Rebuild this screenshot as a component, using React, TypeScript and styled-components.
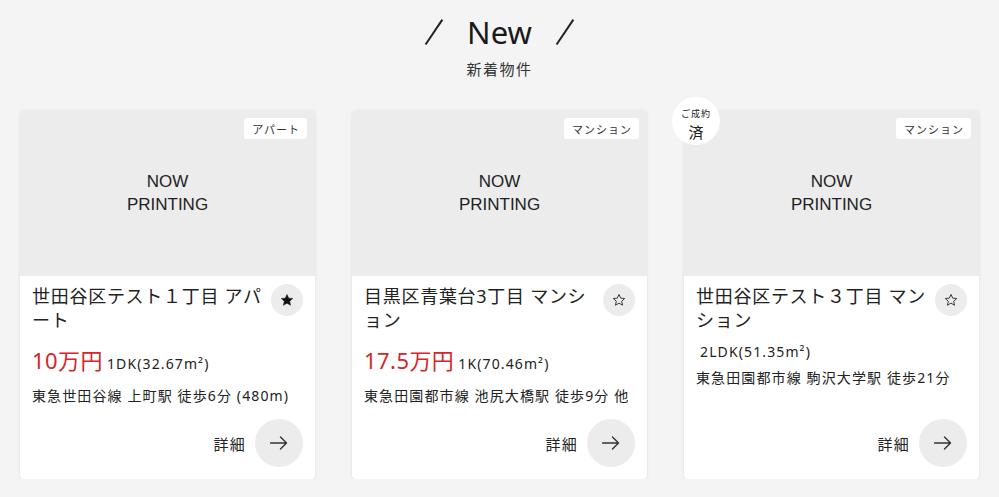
import React from "react";
import styled, { createGlobalStyle } from "styled-components";

const GlobalStyle = createGlobalStyle`
  html, body { margin: 0; padding: 0; background: #f4f4f4; }
  body {
    font-family: "Noto Sans", "Noto Sans CJK JP", sans-serif;
    color: #222;
    -webkit-font-smoothing: antialiased;
  }
`;

const Page = styled.section`
  padding: 12px 20px 0;
  box-sizing: border-box;
  width: 999px;
`;

const Heading = styled.header`
  display: flex;
  flex-direction: column;
  align-items: center;
`;

const TitleRow = styled.div`
  display: flex;
  align-items: center;
  gap: 25px;
  height: 40px;
`;

const Slash = styled.span`
  display: block;
  width: 17px;
  height: 25px;
  position: relative;
  &::before {
    content: "";
    position: absolute;
    left: 7.5px;
    top: -2.5px;
    width: 1.8px;
    height: 30px;
    background: #222;
    transform: rotate(34deg);
  }
`;

const Title = styled.h2`
  margin: 0;
  font-family: "Noto Sans", sans-serif;
  font-weight: 400;
  font-size: 31px;
  line-height: 40px;
  color: #1a1a1a;
`;

const Subtitle = styled.p`
  margin: 5px 0 0;
  font-size: 15px;
  line-height: 24px;
  letter-spacing: 0.1em;
  color: #333;
`;

const Grid = styled.div`
  margin-top: 29px;
  display: grid;
  grid-template-columns: repeat(3, 295px);
  column-gap: 37px;
`;

const Card = styled.article`
  position: relative;
  background: #fff;
  border-radius: 4px;
  box-shadow: 0 1px 3px rgba(0, 0, 0, 0.1);
  display: flex;
  flex-direction: column;
  height: 369px;
`;

const ImageArea = styled.div`
  position: relative;
  height: 166px;
  background: #ececec;
  border-radius: 4px 4px 0 0;
  display: flex;
  align-items: center;
  justify-content: center;
`;

const NowPrinting = styled.div`
  font-family: "Liberation Sans", Arial, sans-serif;
  font-size: 17px;
  line-height: 23px;
  text-align: center;
  color: #222;
`;

const TypeBadge = styled.span`
  position: absolute;
  top: 8px;
  right: 8px;
  background: #fff;
  border-radius: 3px;
  height: 21px;
  padding: 0 7px 0 8px;
  display: flex;
  align-items: center;
  font-size: 11px;
  letter-spacing: 1px;
  color: #333;
`;

const SoldBadge = styled.div`
  position: absolute;
  top: -13px;
  left: -12px;
  width: 48px;
  height: 48px;
  box-sizing: border-box;
  padding-top: 7px;
  border-radius: 50%;
  background: #fff;
  display: flex;
  flex-direction: column;
  align-items: center;
  justify-content: center;
  gap: 3px;
  z-index: 2;
  color: #222;
`;

const SoldSmall = styled.span`
  font-size: 9px;
  line-height: 12px;
  letter-spacing: 1px;
`;

const SoldBig = styled.span`
  font-size: 15px;
  line-height: 18px;
`;

const Body = styled.div`
  flex: 1;
  display: flex;
  flex-direction: column;
  padding: 8px 12px 12px 12px;
`;

const TitleLine = styled.div`
  display: flex;
  align-items: flex-start;
  justify-content: space-between;
  gap: 4px;
`;

const CardTitle = styled.h3`
  margin: 0;
  font-weight: 400;
  font-size: 18px;
  line-height: 24px;
  letter-spacing: 0.04em;
  color: #222;
  flex: 1;
`;

const FavButton = styled.button`
  flex: none;
  width: 32px;
  height: 32px;
  border-radius: 50%;
  border: none;
  background: #ececec;
  display: flex;
  align-items: center;
  justify-content: center;
  padding: 0;
`;

const PriceLine = styled.div`
  margin-top: 12px;
  display: flex;
  align-items: baseline;
`;

const Price = styled.span`
  font-size: 22px;
  line-height: 33px;
  color: #d4262b;
  letter-spacing: 0.02em;
`;

const Spec = styled.span`
  margin-left: 4px;
  font-size: 14px;
  line-height: 15px;
  letter-spacing: 0.08em;
  color: #222;
`;

const Access = styled.p`
  margin: 8px 0 0;
  font-size: 14px;
  line-height: 21px;
  letter-spacing: 0.08em;
  color: #222;
`;

const Footer = styled.div`
  margin-top: auto;
  display: flex;
  justify-content: flex-end;
  align-items: center;
  gap: 9px;
`;

const DetailLabel = styled.span`
  font-size: 15px;
  letter-spacing: 0.08em;
  color: #222;
`;

const ArrowCircle = styled.a`
  width: 48px;
  height: 48px;
  border-radius: 50%;
  background: #ececec;
  display: flex;
  align-items: center;
  justify-content: center;
`;

const Star = ({ filled }: { filled: boolean }) => (
  <svg width="14" height="14" viewBox="0 0 24 24">
    <path
      d="M12 2.5l2.9 6.3 6.9.7-5.2 4.6 1.5 6.8L12 17.4l-6.1 3.5 1.5-6.8-5.2-4.6 6.9-.7z"
      fill={filled ? "#111" : "none"}
      stroke="#222"
      strokeWidth={filled ? 1 : 1.5}
      strokeLinejoin="round"
    />
  </svg>
);

const Arrow = () => (
  <svg width="18" height="14" viewBox="0 0 18 14" fill="none">
    <path d="M0.5 7H16.5M10.5 1l6 6-6 6" stroke="#333" strokeWidth="1.4" strokeLinecap="round" strokeLinejoin="round" />
  </svg>
);

type Item = {
  title: string;
  type: string;
  price?: string;
  spec: string;
  access: string;
  fav: boolean;
  sold?: boolean;
};

const items: Item[] = [
  {
    title: "世田谷区テスト１丁目 アパート",
    type: "アパート",
    price: "10万円",
    spec: "1DK(32.67m²)",
    access: "東急世田谷線 上町駅 徒歩6分 (480m)",
    fav: true,
  },
  {
    title: "目黒区青葉台3丁目 マンション",
    type: "マンション",
    price: "17.5万円",
    spec: "1K(70.46m²)",
    access: "東急田園都市線 池尻大橋駅 徒歩9分 他",
    fav: false,
  },
  {
    title: "世田谷区テスト３丁目 マンション",
    type: "マンション",
    spec: "2LDK(51.35m²)",
    access: "東急田園都市線 駒沢大学駅 徒歩21分",
    fav: false,
    sold: true,
  },
];

export default function App() {
  return (
    <>
      <GlobalStyle />
      <Page>
        <Heading>
          <TitleRow>
            <Slash />
            <Title>New</Title>
            <Slash />
          </TitleRow>
          <Subtitle>新着物件</Subtitle>
        </Heading>
        <Grid>
          {items.map((it, i) => (
            <Card key={i}>
              {it.sold && (
                <SoldBadge>
                  <SoldSmall>ご成約</SoldSmall>
                  <SoldBig>済</SoldBig>
                </SoldBadge>
              )}
              <ImageArea>
                <NowPrinting>
                  NOW
                  <br />
                  PRINTING
                </NowPrinting>
                <TypeBadge>{it.type}</TypeBadge>
              </ImageArea>
              <Body>
                <TitleLine>
                  <CardTitle>{it.title}</CardTitle>
                  <FavButton aria-label="お気に入り">
                    <Star filled={it.fav} />
                  </FavButton>
                </TitleLine>
                <PriceLine>
                  {it.price && <Price>{it.price}</Price>}
                  <Spec>{it.spec}</Spec>
                </PriceLine>
                <Access>{it.access}</Access>
                <Footer>
                  <DetailLabel>詳細</DetailLabel>
                  <ArrowCircle href="#">
                    <Arrow />
                  </ArrowCircle>
                </Footer>
              </Body>
            </Card>
          ))}
        </Grid>
      </Page>
    </>
  );
}
